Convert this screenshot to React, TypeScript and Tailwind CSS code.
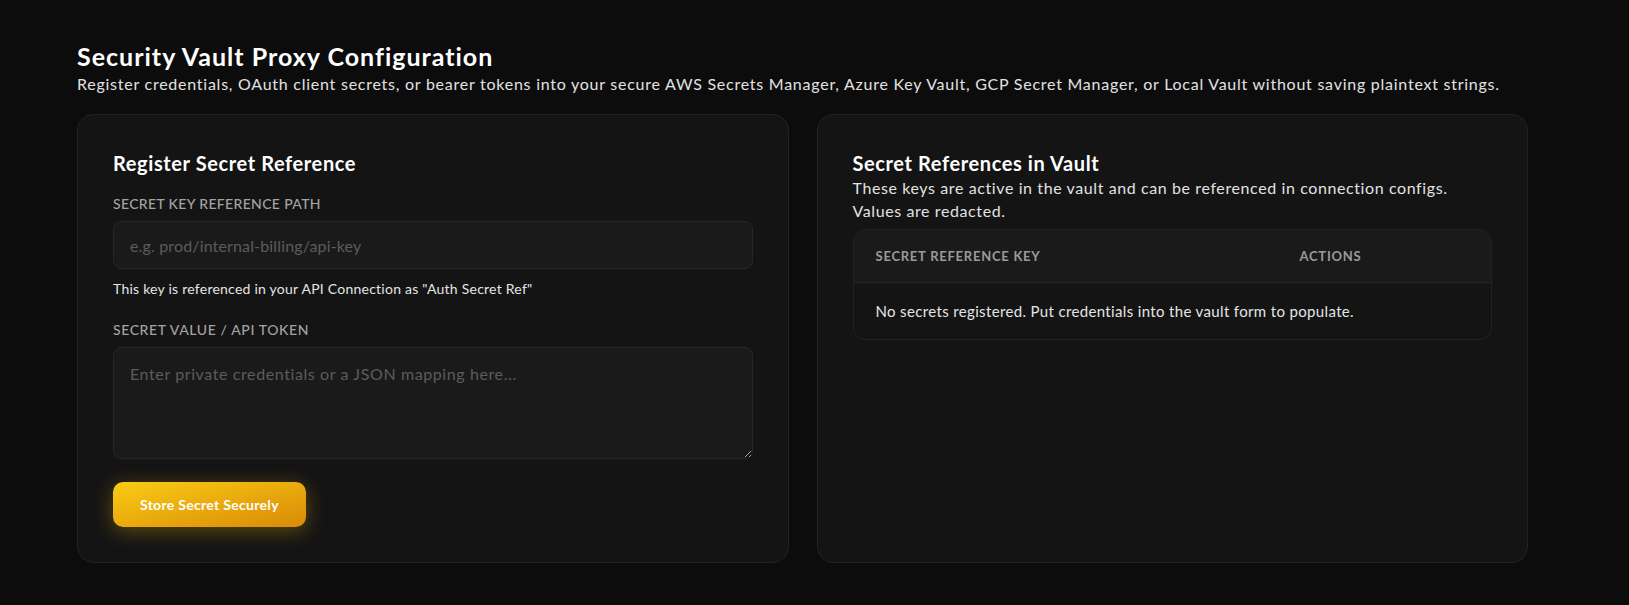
import React, { useState } from 'react';

interface SecretRef {
  key: string;
}

const VaultConfig: React.FC = () => {
  const [secretKey, setSecretKey] = useState('');
  const [secretValue, setSecretValue] = useState('');
  const [secrets, setSecrets] = useState<SecretRef[]>([]);

  const storeSecret = () => {
    if (!secretKey.trim() || !secretValue.trim()) return;
    setSecrets([...secrets, { key: secretKey.trim() }]);
    setSecretKey('');
    setSecretValue('');
  };

  return (
    <div className="min-h-screen bg-[#0c0c0c] text-white font-['Lato','Noto_Sans',sans-serif]">
      <div className="ml-[77px] w-[1451px] pt-10 pb-10">
        {/* Header */}
        <h1 className="text-[25px] font-bold leading-8 tracking-[1px]">Security Vault Proxy Configuration</h1>
        <p className="text-base leading-6 tracking-[0.75px] text-[#e2e2e2]">
          Register credentials, OAuth client secrets, or bearer tokens into your secure AWS Secrets Manager, Azure Key
          Vault, GCP Secret Manager, or Local Vault without saving plaintext strings.
        </p>

        <div className="mt-[18px] grid grid-cols-2 gap-7">
          {/* Register form */}
          <section className="rounded-2xl border border-[#222222] bg-[#141414] p-[35px]">
            <h2 className="mb-[18px] text-xl font-bold leading-[26px] tracking-[0.6px]">Register Secret Reference</h2>

            <label className="mb-[7px] block text-sm font-medium uppercase leading-5 tracking-wide text-[#a3a3a3]">
              Secret Key Reference Path
            </label>
            <input
              value={secretKey}
              onChange={(e) => setSecretKey(e.target.value)}
              placeholder="e.g. prod/internal-billing/api-key"
              className="h-12 w-full rounded-lg border border-[#262626] bg-[#1a1a1a] px-4 text-base tracking-[0.15px] text-white outline-none placeholder:text-[#5c5c5c]"
            />
            <p className="mt-[10px] text-sm leading-5 tracking-[0.24px] text-[#e5e5e5]">
              This key is referenced in your API Connection as "Auth Secret Ref"
            </p>

            <label className="mt-[21px] mb-[7px] block text-sm font-medium uppercase leading-5 tracking-[0.6px] text-[#a3a3a3]">
              Secret Value / API Token
            </label>
            <textarea
              value={secretValue}
              onChange={(e) => setSecretValue(e.target.value)}
              placeholder="Enter private credentials or a JSON mapping here..."
              className="block h-[112px] w-full rounded-lg border border-[#262626] bg-[#1a1a1a] px-4 py-3.5 text-base leading-6 tracking-[0.6px] text-white outline-none placeholder:text-[#5c5c5c]"
            />

            <button
              onClick={storeSecret}
              className="mt-[23px] h-[45px] rounded-[10px] bg-gradient-to-br from-[#facc15] to-[#d98a06] px-[27px] text-sm font-bold tracking-[0.3px] text-white shadow-[0_4px_20px_rgba(234,179,8,0.35)]"
            >
              Store Secret Securely
            </button>
          </section>

          {/* Secrets list */}
          <section className="rounded-2xl border border-[#222222] bg-[#141414] p-[35px]">
            <h2 className="text-xl font-bold leading-[26px] tracking-[0.6px]">Secret References in Vault</h2>
            <p className="text-base leading-[23px] tracking-[0.6px] text-[#e2e2e2]">
              These keys are active in the vault and can be referenced in connection configs. Values are redacted.
            </p>

            <div className="mt-[7px] overflow-hidden rounded-xl border border-[#222222]">
              <table className="w-full border-collapse text-left">
                <thead>
                  <tr className="border-b border-[#262626] bg-[#1a1a1a]">
                    <th className="w-[424px] px-[22px] py-4 text-[13px] font-bold uppercase leading-5 tracking-[0.75px] text-[#9a9a9a]">
                      Secret Reference Key
                    </th>
                    <th className="px-[22px] py-4 text-[13px] font-bold uppercase leading-5 tracking-[0.75px] text-[#9a9a9a]">
                      Actions
                    </th>
                  </tr>
                </thead>
                <tbody>
                  {secrets.length === 0 ? (
                    <tr>
                      <td colSpan={2} className="px-[22px] py-[18px] text-[15px] leading-5 tracking-[0.35px] text-[#e5e5e5]">
                        No secrets registered. Put credentials into the vault form to populate.
                      </td>
                    </tr>
                  ) : (
                    secrets.map((s, i) => (
                      <tr key={i} className="border-t border-[#222222]">
                        <td className="px-[22px] py-[18px] font-mono text-sm text-[#e5e5e5]">{s.key}</td>
                        <td className="px-[22px] py-[18px] text-sm text-[#a3a3a3]">••••••••</td>
                      </tr>
                    ))
                  )}
                </tbody>
              </table>
            </div>
          </section>
        </div>
      </div>
    </div>
  );
};

export default function App() {
  return <VaultConfig />;
}
